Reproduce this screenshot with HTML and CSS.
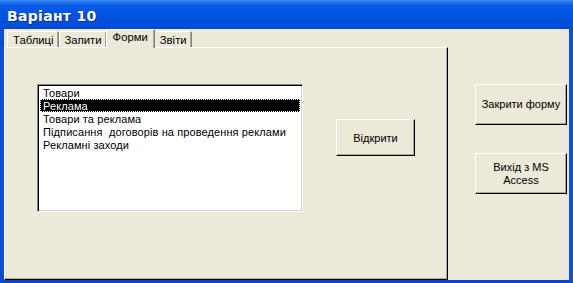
FILE: index.html
```html
<!DOCTYPE html>
<html lang="uk">
<head>
  <meta charset="UTF-8" />
  <title>Варіант 10</title>
  <link rel="stylesheet" href="styles.css">
</head>
<body>
  <div class="window">
    <div class="titlebar">Варіант 10</div>
    <div class="client">
      <div class="tabArea">
        <div class="tabs">
          <div class="tab">Таблиці</div>
          <div class="tab">Запити</div>
          <div class="tab active">Форми</div>
          <div class="tab">Звіти</div>
        </div>
        <div class="panel">
          <div class="listbox">
            <div class="item">Товари</div>
            <div class="item selected">Реклама</div>
            <div class="item">Товари та реклама</div>
            <div class="item">Підписання&nbsp; договорів на проведення реклами</div>
            <div class="item">Рекламні заходи</div>
          </div>
          <button class="btn openBtn">Відкрити</button>
        </div>
      </div>
      <div class="side">
        <button class="btn sideBtn">Закрити форму</button>
        <button class="btn sideBtn">Вихід з MS<br>Access</button>
      </div>
    </div>
  </div>
</body>
</html>
```

FILE: styles.css
```css
body {
  margin: 0;
  font-family: "Liberation Sans", Arial, sans-serif;
  font-size: 11px;
  background: #ece9d8;
}
.window {
  width: 573px;
  height: 283px;
  box-sizing: border-box;
  background: #ece9d8;
  border-left: 4px solid #0a4fd8;
  border-right: 4px solid #0a4fd8;
  border-bottom: 3px solid #0a44c8;
  display: flex;
  flex-direction: column;
}
.titlebar {
  height: 29px;
  margin: 0 -4px;
  padding-left: 7px;
  box-sizing: border-box;
  background: linear-gradient(#3b8cf5 0%, #0a5ce8 18%, #0052e0 50%, #0050dc 85%, #0a48c8 100%);
  color: #fff;
  font-family: "DejaVu Sans", sans-serif;
  font-weight: bold;
  font-size: 14px;
  letter-spacing: 0.3px;
  line-height: 33px;
  text-shadow: 1px 1px 0 #0b2a8a;
}
.client {
  flex: 1;
  display: flex;
}
.tabArea {
  width: 444px;
  display: flex;
  flex-direction: column;
  padding-top: 1px;
}
.tabs {
  display: flex;
  padding-left: 3px;
  height: 17px;
  align-items: flex-end;
  position: relative;
  z-index: 1;
}
.tab {
  height: 15px;
  padding: 0 4px 0 5px;
  line-height: 16px;
  font-size: 11.3px;
  border: 1px solid #fff;
  border-right-color: #808080;
  border-bottom: none;
  box-shadow: inset -1px 0 0 #aca899;
  background: #ece9d8;
  color: #000;
}
.tab.active {
  height: 18px;
  line-height: 14px;
  padding: 0 6px;
  margin: 0 -1px 0 -1px;
  position: relative;
  top: 1px;
  align-self: flex-end;
}
.panel {
  flex: 1;
  box-sizing: border-box;
  border: 1px solid #fff;
  border-right-color: #000;
  border-bottom-color: #000;
  box-shadow: inset -1px -1px 0 #aca899;
  display: flex;
  align-items: flex-start;
  padding: 36px 0 0 32px;
}
.listbox {
  width: 266px;
  height: 128px;
  box-sizing: border-box;
  background: #fff;
  border: 1px solid #fff;
  border-top-color: #808080;
  border-left-color: #808080;
  box-shadow: inset 1px 1px 0 #000, inset -1px -1px 0 #d4d0c8;
  padding: 1px 2px;
}
.item {
  height: 13px;
  line-height: 14px;
  padding-left: 3px;
  white-space: nowrap;
  letter-spacing: 0.1px;
  color: #000;
}
.item.selected {
  background: #000;
  color: #fff;
  outline: 1px dotted #fff;
  outline-offset: -1px;
}
.btn {
  font-family: "Liberation Sans", Arial, sans-serif;
  font-size: 11px;
  color: #000;
  background: #ece9d8;
  border: 1px solid #fff;
  border-right-color: #000;
  border-bottom-color: #000;
  box-shadow: inset -1px -1px 0 #aca899;
  padding: 0;
  cursor: pointer;
}
.openBtn {
  width: 79px;
  height: 37px;
  margin: 35px 0 0 33px;
}
.side {
  flex: 1;
  display: flex;
  flex-direction: column;
  align-items: flex-start;
  padding: 55px 0 0 27px;
  gap: 28px;
}
.sideBtn {
  width: 92px;
  height: 41px;
  line-height: 13px;
}
```
